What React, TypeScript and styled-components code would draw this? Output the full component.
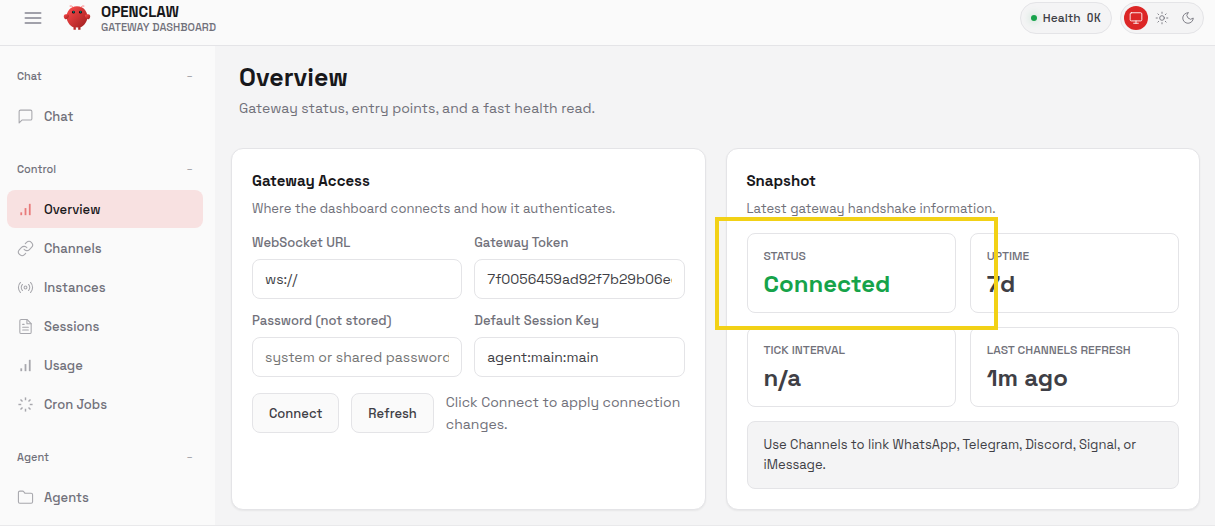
import React, { useId, useState } from "react";
import styled, { createGlobalStyle } from "styled-components";

const GlobalStyle = createGlobalStyle`
  *, *::before, *::after { box-sizing: border-box; }
  body {
    margin: 0;
    background: #f4f4f5;
    color: #3f3f46;
    font-family: "Space Grotesk", Inter, "Open Sans", sans-serif;
    font-size: 14px;
  }
  button, input { font: inherit; color: inherit; }
  h1, h2, p, dl, dt, dd, ul { margin: 0; padding: 0; }
`;

const Shell = styled.div`
  display: flex;
  flex-direction: column;
  min-height: 100vh;
  border-bottom: 1px solid #e9e9eb;
`;

const Topbar = styled.header`
  display: flex;
  align-items: center;
  justify-content: space-between;
  padding: 0 11px 9px 15px;
  background: #fafafa;
  border-bottom: 1px solid #e4e4e7;
`;

const TopGroup = styled.div<{ $gap: number }>`
  display: flex;
  align-items: center;
  gap: ${(p) => p.$gap}px;
`;

const MenuButton = styled.button`
  display: grid;
  place-items: center;
  width: 36px;
  height: 36px;
  padding: 0;
  border: 0;
  background: none;
  color: #a1a1aa;
`;

const Brand = styled.div`
  display: flex;
  align-items: center;
  gap: 10px;
`;

const BrandName = styled.div`
  padding-top: 2px;
  font-size: 15px;
  font-weight: 700;
  line-height: 16px;
  color: #18181b;
`;

const BrandSub = styled.div`
  font-size: 11px;
  font-weight: 500;
  line-height: 14px;
  color: #71717a;
`;

const Pill = styled.div`
  display: flex;
  align-items: center;
  gap: 6px;
  height: 32px;
  padding: 0 10px;
  border: 1px solid #e4e4e7;
  border-radius: 16px;
  background: #f4f4f5;
  font-size: 12px;
  font-weight: 500;
`;

const StatusDot = styled.span`
  width: 6px;
  height: 6px;
  border-radius: 50%;
  background: #16a34a;
  box-shadow: 0 0 8px rgba(22, 163, 74, 0.4);
`;

const Mono = styled.span`
  font-family: "JetBrains Mono", "Liberation Mono", monospace;
`;

const ThemeSwitch = styled.div`
  display: flex;
  align-items: center;
  gap: 2px;
  padding: 3px;
  border: 1px solid #e4e4e7;
  border-radius: 16px;
  background: #f4f4f5;
`;

const ThemeButton = styled.button<{ $active: boolean }>`
  display: grid;
  place-items: center;
  width: 24px;
  height: 24px;
  padding: 0;
  border: 0;
  border-radius: 50%;
  background: ${(p) => (p.$active ? "#dc2626" : "transparent")};
  color: ${(p) => (p.$active ? "#ffffff" : "#71717a")};
`;

const Body = styled.div`
  display: flex;
  flex: 1;
`;

const Sidebar = styled.nav`
  flex: 0 0 215px;
  padding: 16px 12px 9px 7px;
  background: #fafafa;
`;

const NavSection = styled.section`
  & + & { margin-top: 20px; }
`;

const NavLabel = styled.button`
  display: flex;
  align-items: center;
  justify-content: space-between;
  width: 100%;
  height: 28px;
  margin-bottom: 7px;
  padding: 0 10px;
  border: 0;
  background: none;
  font-size: 11px;
  font-weight: 500;
  color: #71717a;
`;

const Collapse = styled.span`
  font-weight: 400;
  opacity: 0.7;
`;

const NavList = styled.ul`
  display: flex;
  flex-direction: column;
  gap: 1px;
  list-style: none;
`;

const NavLink = styled.a<{ $active: boolean }>`
  display: flex;
  align-items: center;
  gap: 10px;
  height: 38px;
  padding: 0 10px;
  border-radius: 8px;
  font-size: 13px;
  font-weight: 500;
  text-decoration: none;
  background: ${(p) => (p.$active ? "#f8e1e1" : "transparent")};
  color: ${(p) => (p.$active ? "#18181b" : "#71717a")};
  svg {
    color: ${(p) => (p.$active ? "#dc2626" : "#71717a")};
    opacity: ${(p) => (p.$active ? 0.55 : 0.6)};
  }
`;

const Main = styled.main`
  flex: 1;
  min-width: 0;
  padding: 16px 15px 15px 16px;
`;

const PageHead = styled.div`
  padding: 0 8px;
  margin-bottom: 29px;
`;

const PageTitle = styled.h1`
  font-size: 25px;
  font-weight: 700;
  line-height: 30px;
  color: #18181b;
`;

const PageSub = styled.p`
  margin-top: 6px;
  font-size: 14px;
  line-height: 21px;
  color: #71717a;
`;

const Cards = styled.div`
  display: grid;
  grid-template-columns: 1fr 1fr;
  gap: 20px;
`;

const Card = styled.section`
  min-width: 0;
  padding: 20px;
  border: 1px solid #e4e4e7;
  border-radius: 12px;
  background: #ffffff;
  box-shadow: 0 1px 2px rgba(0, 0, 0, 0.06);
`;

const CardTitle = styled.h2`
  font-size: 15px;
  font-weight: 600;
  line-height: 24px;
  color: #18181b;
`;

const CardSub = styled.p`
  margin: 6px 0 14px;
  font-size: 13px;
  line-height: 20px;
  color: #71717a;
`;

const Fields = styled.form`
  display: grid;
  grid-template-columns: 1fr 1fr;
  gap: 12px;
`;

const Field = styled.div`
  display: flex;
  flex-direction: column;
  gap: 6px;
  min-width: 0;
`;

const FieldLabel = styled.label`
  font-size: 13px;
  font-weight: 500;
  line-height: 20px;
  color: #71717a;
`;

const TextInput = styled.input`
  width: 100%;
  height: 40px;
  padding: 0 12px;
  border: 1px solid #e4e4e7;
  border-radius: 8px;
  background: #ffffff;
  font-size: 14px;
  color: #3f3f46;
  &::placeholder { color: #757575; opacity: 1; }
`;

const Actions = styled.div`
  display: flex;
  align-items: center;
  gap: 12px;
  margin-top: 14px;
`;

const Button = styled.button`
  flex: none;
  height: 40px;
  padding: 0 16px;
  border: 1px solid #e4e4e7;
  border-radius: 8px;
  background: #fafafa;
  font-size: 13px;
  font-weight: 500;
`;

const Hint = styled.span`
  font-size: 14px;
  line-height: 22px;
  color: #71717a;
`;

const Stats = styled.dl`
  display: grid;
  grid-template-columns: 1fr 1fr;
  gap: 14px;
`;

const Stat = styled.div`
  position: relative;
  padding: 15px 16px 14px;
  border: 1px solid #e4e4e7;
  border-radius: 8px;
`;

const StatLabel = styled.dt`
  font-size: 12px;
  font-weight: 500;
  line-height: 14px;
  text-transform: uppercase;
  color: #71717a;
`;

const StatValue = styled.dd<{ $ok?: boolean }>`
  margin-top: 7px;
  font-size: 24px;
  font-weight: 600;
  line-height: 28px;
  color: ${(p) => (p.$ok ? "#16a34a" : "#3f3f46")};
`;

const Marker = styled.span`
  position: absolute;
  z-index: 1;
  inset: -17px -43px -18px -33px;
  border: 4px solid #f2d116;
  pointer-events: none;
`;

const Callout = styled.p`
  && {
    margin-top: 14px;
    padding: 13px 16px;
  }
  border: 1px solid #e4e4e7;
  border-radius: 8px;
  background: #f4f4f5;
  font-size: 13px;
  line-height: 20px;
`;

const ICONS = {
  menu: ["M3 6h18", "M3 12h18", "M3 18h18"],
  chat: ["M21 15a2 2 0 0 1-2 2H7l-4 4V5a2 2 0 0 1 2-2h14a2 2 0 0 1 2 2z"],
  bars: ["M12 20V10", "M18 20V4", "M6 20v-4"],
  link: [
    "M10 13a5 5 0 0 0 7.54.54l3-3a5 5 0 0 0-7.07-7.07l-1.72 1.71",
    "M14 11a5 5 0 0 0-7.54-.54l-3 3a5 5 0 0 0 7.07 7.07l1.71-1.71",
  ],
  radio: [
    "M14 12a2 2 0 1 1-4 0a2 2 0 0 1 4 0z",
    "M16.24 7.76a6 6 0 0 1 0 8.49",
    "M7.76 16.24a6 6 0 0 1 0-8.49",
    "M19.07 4.93a10 10 0 0 1 0 14.14",
    "M4.93 19.07a10 10 0 0 1 0-14.14",
  ],
  file: [
    "M14 2H6a2 2 0 0 0-2 2v16a2 2 0 0 0 2 2h12a2 2 0 0 0 2-2V8z",
    "M14 2v6h6",
    "M16 13H8",
    "M16 17H8",
    "M10 9H8",
  ],
  loader: [
    "M12 2v4",
    "M12 18v4",
    "M4.93 4.93l2.83 2.83",
    "M16.24 16.24l2.83 2.83",
    "M2 12h4",
    "M18 12h4",
    "M4.93 19.07l2.83-2.83",
    "M16.24 7.76l2.83-2.83",
  ],
  folder: [
    "M4 20h16a2 2 0 0 0 2-2V8a2 2 0 0 0-2-2h-7.93a2 2 0 0 1-1.66-.9l-.82-1.2A2 2 0 0 0 7.93 3H4a2 2 0 0 0-2 2v13c0 1.1.9 2 2 2Z",
  ],
  monitor: ["M4 3h16a2 2 0 0 1 2 2v10a2 2 0 0 1-2 2H4a2 2 0 0 1-2-2V5a2 2 0 0 1 2-2z", "M8 21h8", "M12 17v4"],
  sun: [
    "M16 12a4 4 0 1 1-8 0a4 4 0 0 1 8 0z",
    "M12 2v2",
    "M12 20v2",
    "M4.93 4.93l1.41 1.41",
    "M17.66 17.66l1.41 1.41",
    "M2 12h2",
    "M20 12h2",
    "M6.34 17.66l-1.41 1.41",
    "M19.07 4.93l-1.41 1.41",
  ],
  moon: ["M12 3a6 6 0 0 0 9 9 9 9 0 1 1-9-9z"],
};

type IconName = keyof typeof ICONS;

const HEAVY: Partial<Record<IconName, number>> = { bars: 2.5, loader: 2 };

function Icon({ name, size, stroke = 1.5 }: { name: IconName; size: number; stroke?: number }) {
  return (
    <svg
      width={size}
      height={size}
      viewBox="0 0 24 24"
      fill="none"
      stroke="currentColor"
      strokeWidth={HEAVY[name] ?? stroke}
      strokeLinecap={HEAVY[name] ? "butt" : "round"}
      strokeLinejoin="round"
      aria-hidden="true"
    >
      {ICONS[name].map((d) => (
        <path key={d} d={d} />
      ))}
    </svg>
  );
}

function Logo() {
  return (
    <svg width="28" height="28" viewBox="0 0 120 120" fill="none" aria-hidden="true">
      <defs>
        <linearGradient id="shell" x1="0%" y1="0%" x2="100%" y2="100%">
          <stop offset="0%" stopColor="#ff4d4d" />
          <stop offset="100%" stopColor="#991b1b" />
        </linearGradient>
      </defs>
      <g fill="url(#shell)">
        <path d="M60 10C30 10 15 35 15 55C15 75 30 95 45 100V110H55V100C55 100 60 102 65 100V110H75V100C90 95 105 75 105 55C105 35 90 10 60 10Z" />
        <path d="M20 45C5 40 0 50 5 60C10 70 20 65 25 55C28 48 25 45 20 45Z" />
        <path d="M100 45C115 40 120 50 115 60C110 70 100 65 95 55C92 48 95 45 100 45Z" />
      </g>
      <path d="M45 15Q35 5 30 8M75 15Q85 5 90 8" stroke="#ff4d4d" strokeWidth="3" strokeLinecap="round" />
      <circle cx="45" cy="35" r="6" fill="#050810" />
      <circle cx="75" cy="35" r="6" fill="#050810" />
      <circle cx="46" cy="34" r="2.5" fill="#00e5cc" />
      <circle cx="76" cy="34" r="2.5" fill="#00e5cc" />
    </svg>
  );
}

const NAV: { label: string; items: { label: string; icon: IconName }[] }[] = [
  { label: "Chat", items: [{ label: "Chat", icon: "chat" }] },
  {
    label: "Control",
    items: [
      { label: "Overview", icon: "bars" },
      { label: "Channels", icon: "link" },
      { label: "Instances", icon: "radio" },
      { label: "Sessions", icon: "file" },
      { label: "Usage", icon: "bars" },
      { label: "Cron Jobs", icon: "loader" },
    ],
  },
  { label: "Agent", items: [{ label: "Agents", icon: "folder" }] },
];

const THEMES: { label: string; icon: IconName }[] = [
  { label: "System theme", icon: "monitor" },
  { label: "Light theme", icon: "sun" },
  { label: "Dark theme", icon: "moon" },
];

const STATS = [
  { label: "Status", value: "Connected", ok: true },
  { label: "Uptime", value: "7d" },
  { label: "Tick Interval", value: "n/a" },
  { label: "Last Channels Refresh", value: "1m ago" },
];

function LabeledInput({ label, value = "", placeholder }: { label: string; value?: string; placeholder?: string }) {
  const id = useId();
  return (
    <Field>
      <FieldLabel htmlFor={id}>{label}</FieldLabel>
      <TextInput id={id} type="text" defaultValue={value} placeholder={placeholder} />
    </Field>
  );
}

export default function App() {
  const [theme, setTheme] = useState(0);
  return (
    <Shell>
      <GlobalStyle />
      <Topbar>
        <TopGroup $gap={12}>
          <MenuButton type="button" aria-label="Toggle navigation">
            <Icon name="menu" size={20} stroke={2.4} />
          </MenuButton>
          <Brand>
            <Logo />
            <div>
              <BrandName>OPENCLAW</BrandName>
              <BrandSub>GATEWAY DASHBOARD</BrandSub>
            </div>
          </Brand>
        </TopGroup>
        <TopGroup $gap={8}>
          <Pill>
            <StatusDot />
            <span>Health</span>
            <Mono>OK</Mono>
          </Pill>
          <ThemeSwitch>
            {THEMES.map((t, i) => (
              <ThemeButton
                key={t.label}
                type="button"
                aria-label={t.label}
                aria-pressed={theme === i}
                $active={theme === i}
                onClick={() => setTheme(i)}
              >
                <Icon name={t.icon} size={14} />
              </ThemeButton>
            ))}
          </ThemeSwitch>
        </TopGroup>
      </Topbar>
      <Body>
        <Sidebar>
          {NAV.map((section) => (
            <NavSection key={section.label}>
              <NavLabel type="button">
                <span>{section.label}</span>
                <Collapse>−</Collapse>
              </NavLabel>
              <NavList>
                {section.items.map((item) => (
                  <li key={item.label}>
                    <NavLink href={`#${item.label}`} $active={item.label === "Overview"}>
                      <Icon name={item.icon} size={17} />
                      {item.label}
                    </NavLink>
                  </li>
                ))}
              </NavList>
            </NavSection>
          ))}
        </Sidebar>
        <Main>
          <PageHead>
            <PageTitle>Overview</PageTitle>
            <PageSub>Gateway status, entry points, and a fast health read.</PageSub>
          </PageHead>
          <Cards>
            <Card>
              <CardTitle>Gateway Access</CardTitle>
              <CardSub>Where the dashboard connects and how it authenticates.</CardSub>
              <Fields>
                <LabeledInput label="WebSocket URL" value="ws://" />
                <LabeledInput label="Gateway Token" value="7f0056459ad92f7b29b06ec" />
                <LabeledInput label="Password (not stored)" placeholder="system or shared password" />
                <LabeledInput label="Default Session Key" value="agent:main:main" />
              </Fields>
              <Actions>
                <Button type="button">Connect</Button>
                <Button type="button">Refresh</Button>
                <Hint>Click Connect to apply connection changes.</Hint>
              </Actions>
            </Card>
            <Card>
              <CardTitle>Snapshot</CardTitle>
              <CardSub>Latest gateway handshake information.</CardSub>
              <Stats>
                {STATS.map((s) => (
                  <Stat key={s.label}>
                    <StatLabel>{s.label}</StatLabel>
                    <StatValue $ok={s.ok}>{s.value}</StatValue>
                    {s.ok && <Marker />}
                  </Stat>
                ))}
              </Stats>
              <Callout>Use Channels to link WhatsApp, Telegram, Discord, Signal, or iMessage.</Callout>
            </Card>
          </Cards>
        </Main>
      </Body>
    </Shell>
  );
}
